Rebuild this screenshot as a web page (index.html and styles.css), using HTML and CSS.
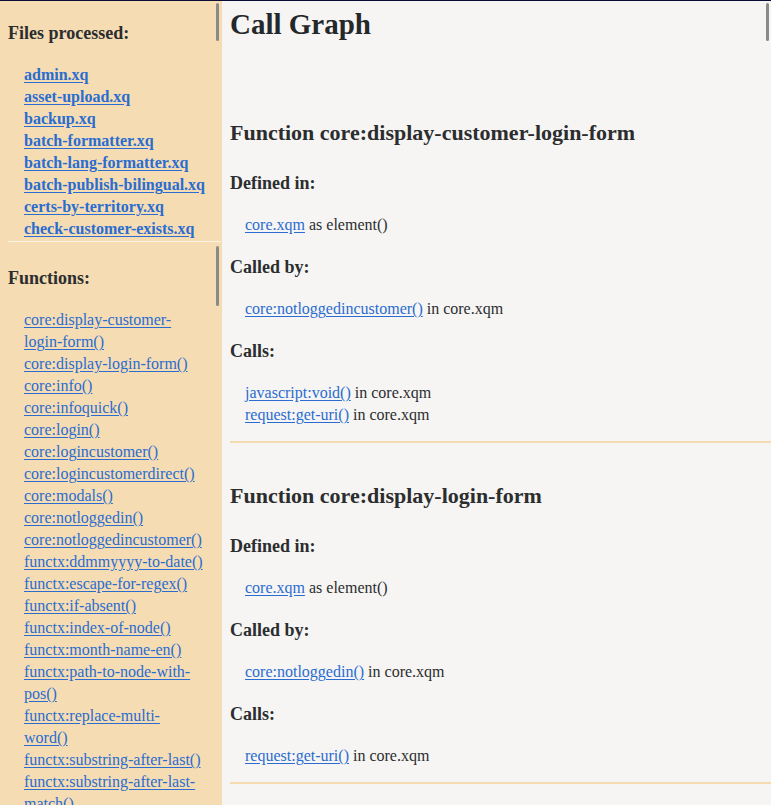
FILE: index.html
```html
<!DOCTYPE html>
<html lang="en">
<head>
<meta charset="utf-8">
<title>Call Graph</title>
<link rel="stylesheet" href="styles.css">
</head>
<body>
<div class="topline"></div>
<div class="layout">
  <aside class="sidebar">
    <section class="panel files">
      <h3 class="side-title">Files processed:</h3>
      <ul class="side-list bold">
        <li><a href="#">admin.xq</a></li>
        <li><a href="#">asset-upload.xq</a></li>
        <li><a href="#">backup.xq</a></li>
        <li><a href="#">batch-formatter.xq</a></li>
        <li><a href="#">batch-lang-formatter.xq</a></li>
        <li><a href="#">batch-publish-bilingual.xq</a></li>
        <li><a href="#">certs-by-territory.xq</a></li>
        <li><a href="#">check-customer-exists.xq</a></li>
      </ul>
      <div class="thumb thumb-files"></div>
    </section>
    <div class="side-sep"></div>
    <section class="panel functions">
      <h3 class="side-title">Functions:</h3>
      <ul class="side-list">
        <li><a href="#">core:display-customer-login-form()</a></li>
        <li><a href="#">core:display-login-form()</a></li>
        <li><a href="#">core:info()</a></li>
        <li><a href="#">core:infoquick()</a></li>
        <li><a href="#">core:login()</a></li>
        <li><a href="#">core:logincustomer()</a></li>
        <li><a href="#">core:logincustomerdirect()</a></li>
        <li><a href="#">core:modals()</a></li>
        <li><a href="#">core:notloggedin()</a></li>
        <li><a href="#">core:notloggedincustomer()</a></li>
        <li><a href="#">functx:ddmmyyyy-to-date()</a></li>
        <li><a href="#">functx:escape-for-regex()</a></li>
        <li><a href="#">functx:if-absent()</a></li>
        <li><a href="#">functx:index-of-node()</a></li>
        <li><a href="#">functx:month-name-en()</a></li>
        <li><a href="#">functx:path-to-node-with-pos()</a></li>
        <li><a href="#">functx:replace-multi-word()</a></li>
        <li><a href="#">functx:substring-after-last()</a></li>
        <li><a href="#">functx:substring-after-last-match()</a></li>
      </ul>
      <div class="thumb thumb-funcs"></div>
    </section>
  </aside>
  <main class="content">
    <h1 class="page-title">Call Graph</h1>

    <section class="fn">
      <h2 class="fn-title">Function core:display-customer-login-form</h2>
      <h3 class="fn-label">Defined in:</h3>
      <p class="fn-body"><a href="#">core.xqm</a> as element()</p>
      <h3 class="fn-label">Called by:</h3>
      <p class="fn-body"><a href="#">core:notloggedincustomer()</a> in core.xqm</p>
      <h3 class="fn-label">Calls:</h3>
      <p class="fn-body"><a href="#">javascript:void()</a> in core.xqm<br><a href="#">request:get-uri()</a> in core.xqm</p>
    </section>

    <section class="fn">
      <h2 class="fn-title">Function core:display-login-form</h2>
      <h3 class="fn-label">Defined in:</h3>
      <p class="fn-body"><a href="#">core.xqm</a> as element()</p>
      <h3 class="fn-label">Called by:</h3>
      <p class="fn-body"><a href="#">core:notloggedin()</a> in core.xqm</p>
      <h3 class="fn-label">Calls:</h3>
      <p class="fn-body"><a href="#">request:get-uri()</a> in core.xqm</p>
    </section>
    <div class="thumb thumb-main"></div>
  </main>
</div>
</body>
</html>
```

FILE: styles.css
```css
html, body {
  margin: 0;
  padding: 0;
  height: 100%;
}
body {
  font-family: "Liberation Serif", "Times New Roman", serif;
  color: #2b2d2f;
  background: #f6f5f3;
  overflow: hidden;
  display: flex;
  flex-direction: column;
}
.topline {
  height: 1px;
  background: #0b0c33;
  flex: none;
}
.layout {
  flex: 1;
  display: flex;
  min-height: 0;
}
a {
  color: #2a6cd0;
  text-decoration: underline;
  text-underline-offset: 2px;
}
.sidebar {
  width: 221px;
  flex: none;
  background: #f5dcb3;
  display: flex;
  flex-direction: column;
}
.panel {
  position: relative;
  overflow: hidden;
  padding-left: 8px;
}
.files {
  height: 240px;
  flex: none;
}
.functions {
  flex: 1;
}
.side-sep {
  height: 1px;
  margin-left: 8px;
  background: #fdf4e6;
  flex: none;
}
.side-title {
  font-size: 18px;
  font-weight: bold;
  margin: 22px 0 21px;
  line-height: 20px;
}
.functions .side-title {
  margin-top: 26px;
  margin-bottom: 21px;
}
.side-list {
  list-style: none;
  margin: 0;
  padding: 0 0 0 16px;
  font-size: 16px;
  line-height: 22px;
}
.side-list li {
  padding-right: 18px;
}
.side-list.bold {
  font-weight: bold;
}
.side-list.bold li {
  padding-right: 0;
  white-space: nowrap;
}
.thumb {
  position: absolute;
  width: 3px;
  border-radius: 2px;
  background: #8a8a8a;
}
.thumb-files {
  right: 2px;
  top: 2px;
  height: 38px;
}
.thumb-funcs {
  right: 2px;
  top: 4px;
  height: 60px;
}
.content {
  flex: 1;
  position: relative;
  overflow: hidden;
  border-left: 1px solid #f5dcb0;
  padding-left: 8px;
}
.page-title {
  font-size: 29px;
  line-height: 36px;
  margin: 5px 0 0;
  color: #25282a;
}
.fn {
  border-bottom: 2px solid #f5dbb0;
  padding-bottom: 15px;
}
.fn-title {
  font-size: 22px;
  line-height: 28px;
  margin: 39px 0 25px;
}
.fn:first-of-type .fn-title {
  margin-top: 77px;
}
.fn-label {
  font-size: 18px;
  line-height: 22px;
  margin: 20px 0 0;
}
.fn-body {
  font-size: 16px;
  line-height: 22px;
  margin: 20px 0 0 15px;
}
.thumb-main {
  right: 2px;
  top: 2px;
  height: 38px;
}
```
